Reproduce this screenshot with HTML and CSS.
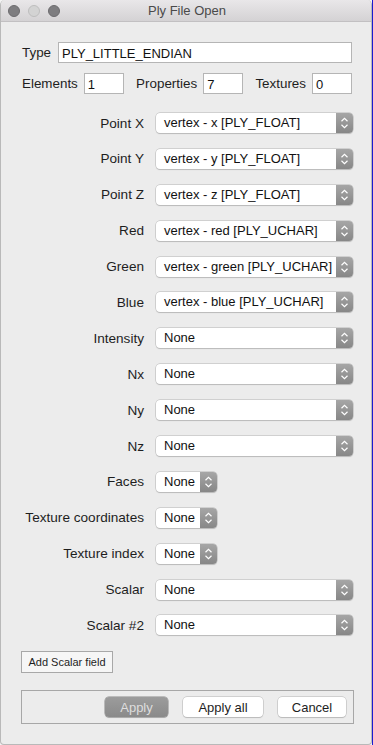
FILE: index.html
```html
<!DOCTYPE html>
<html>
<head>
<meta charset="utf-8">
<link rel="stylesheet" href="styles.css">
</head>
<body>
<div class="window">
  <div class="titlebar">
    <div class="lights">
      <span class="light"></span>
      <span class="light off"></span>
      <span class="light"></span>
    </div>
    <div class="title">Ply File Open</div>
  </div>
  <div class="content">
    <div class="type-row">
      <span class="lbl">Type</span>
      <div class="field wide">PLY_LITTLE_ENDIAN</div>
    </div>
    <div class="count-row">
      <div class="grp"><span class="lbl">Elements</span><div class="field num">1</div></div>
      <div class="grp"><span class="lbl">Properties</span><div class="field num">7</div></div>
      <div class="grp"><span class="lbl">Textures</span><div class="field num">0</div></div>
    </div>
    <div class="grid">
      <span class="rlbl">Point X</span><div class="combo"><span class="val">vertex - x [PLY_FLOAT]</span><span class="arrow"><svg viewBox="0 0 17 20" width="17" height="20"><path d="M5.5 8.2 L8.5 5.4 L11.5 8.2 M5.5 11.8 L8.5 14.6 L11.5 11.8" fill="none" stroke="#fff" stroke-width="1.2"/></svg></span></div>
      <span class="rlbl">Point Y</span><div class="combo"><span class="val">vertex - y [PLY_FLOAT]</span><span class="arrow"><svg viewBox="0 0 17 20" width="17" height="20"><path d="M5.5 8.2 L8.5 5.4 L11.5 8.2 M5.5 11.8 L8.5 14.6 L11.5 11.8" fill="none" stroke="#fff" stroke-width="1.2"/></svg></span></div>
      <span class="rlbl">Point Z</span><div class="combo"><span class="val">vertex - z [PLY_FLOAT]</span><span class="arrow"><svg viewBox="0 0 17 20" width="17" height="20"><path d="M5.5 8.2 L8.5 5.4 L11.5 8.2 M5.5 11.8 L8.5 14.6 L11.5 11.8" fill="none" stroke="#fff" stroke-width="1.2"/></svg></span></div>
      <span class="rlbl">Red</span><div class="combo"><span class="val">vertex - red [PLY_UCHAR]</span><span class="arrow"><svg viewBox="0 0 17 20" width="17" height="20"><path d="M5.5 8.2 L8.5 5.4 L11.5 8.2 M5.5 11.8 L8.5 14.6 L11.5 11.8" fill="none" stroke="#fff" stroke-width="1.2"/></svg></span></div>
      <span class="rlbl">Green</span><div class="combo"><span class="val">vertex - green [PLY_UCHAR]</span><span class="arrow"><svg viewBox="0 0 17 20" width="17" height="20"><path d="M5.5 8.2 L8.5 5.4 L11.5 8.2 M5.5 11.8 L8.5 14.6 L11.5 11.8" fill="none" stroke="#fff" stroke-width="1.2"/></svg></span></div>
      <span class="rlbl">Blue</span><div class="combo"><span class="val">vertex - blue [PLY_UCHAR]</span><span class="arrow"><svg viewBox="0 0 17 20" width="17" height="20"><path d="M5.5 8.2 L8.5 5.4 L11.5 8.2 M5.5 11.8 L8.5 14.6 L11.5 11.8" fill="none" stroke="#fff" stroke-width="1.2"/></svg></span></div>
      <span class="rlbl">Intensity</span><div class="combo"><span class="val">None</span><span class="arrow"><svg viewBox="0 0 17 20" width="17" height="20"><path d="M5.5 8.2 L8.5 5.4 L11.5 8.2 M5.5 11.8 L8.5 14.6 L11.5 11.8" fill="none" stroke="#fff" stroke-width="1.2"/></svg></span></div>
      <span class="rlbl">Nx</span><div class="combo"><span class="val">None</span><span class="arrow"><svg viewBox="0 0 17 20" width="17" height="20"><path d="M5.5 8.2 L8.5 5.4 L11.5 8.2 M5.5 11.8 L8.5 14.6 L11.5 11.8" fill="none" stroke="#fff" stroke-width="1.2"/></svg></span></div>
      <span class="rlbl">Ny</span><div class="combo"><span class="val">None</span><span class="arrow"><svg viewBox="0 0 17 20" width="17" height="20"><path d="M5.5 8.2 L8.5 5.4 L11.5 8.2 M5.5 11.8 L8.5 14.6 L11.5 11.8" fill="none" stroke="#fff" stroke-width="1.2"/></svg></span></div>
      <span class="rlbl">Nz</span><div class="combo"><span class="val">None</span><span class="arrow"><svg viewBox="0 0 17 20" width="17" height="20"><path d="M5.5 8.2 L8.5 5.4 L11.5 8.2 M5.5 11.8 L8.5 14.6 L11.5 11.8" fill="none" stroke="#fff" stroke-width="1.2"/></svg></span></div>
      <span class="rlbl">Faces</span><div class="combo small"><span class="val">None</span><span class="arrow"><svg viewBox="0 0 17 20" width="17" height="20"><path d="M5.5 8.2 L8.5 5.4 L11.5 8.2 M5.5 11.8 L8.5 14.6 L11.5 11.8" fill="none" stroke="#fff" stroke-width="1.2"/></svg></span></div>
      <span class="rlbl">Texture coordinates</span><div class="combo small"><span class="val">None</span><span class="arrow"><svg viewBox="0 0 17 20" width="17" height="20"><path d="M5.5 8.2 L8.5 5.4 L11.5 8.2 M5.5 11.8 L8.5 14.6 L11.5 11.8" fill="none" stroke="#fff" stroke-width="1.2"/></svg></span></div>
      <span class="rlbl">Texture index</span><div class="combo small"><span class="val">None</span><span class="arrow"><svg viewBox="0 0 17 20" width="17" height="20"><path d="M5.5 8.2 L8.5 5.4 L11.5 8.2 M5.5 11.8 L8.5 14.6 L11.5 11.8" fill="none" stroke="#fff" stroke-width="1.2"/></svg></span></div>
      <span class="rlbl">Scalar</span><div class="combo"><span class="val">None</span><span class="arrow"><svg viewBox="0 0 17 20" width="17" height="20"><path d="M5.5 8.2 L8.5 5.4 L11.5 8.2 M5.5 11.8 L8.5 14.6 L11.5 11.8" fill="none" stroke="#fff" stroke-width="1.2"/></svg></span></div>
      <span class="rlbl">Scalar #2</span><div class="combo"><span class="val">None</span><span class="arrow"><svg viewBox="0 0 17 20" width="17" height="20"><path d="M5.5 8.2 L8.5 5.4 L11.5 8.2 M5.5 11.8 L8.5 14.6 L11.5 11.8" fill="none" stroke="#fff" stroke-width="1.2"/></svg></span></div>
    </div>
    <div class="add-row"><button class="add-btn">Add Scalar field</button></div>
    <div class="btn-box">
      <button class="btn disabled">Apply</button>
      <button class="btn">Apply all</button>
      <button class="btn cancel">Cancel</button>
    </div>
  </div>
</div>
</body>
</html>
```
FILE: styles.css
```css
* { box-sizing: border-box; }
html, body { margin: 0; padding: 0; }
body {
  background: #f4f4f4;
  font-family: "Liberation Sans", Arial, sans-serif;
  font-size: 13px;
  color: #1e1e1e;
  width: 373px;
  height: 745px;
  overflow: hidden;
  border-right: 1px solid #1b1bd0;
}
.window {
  width: 372px;
  height: 745px;
  background: #ececec;
  border: 1px solid #b9b9b9;
  border-top: none;
  border-radius: 5px 5px 4px 4px;
  overflow: hidden;
  display: flex;
  flex-direction: column;
}
.titlebar {
  height: 22px;
  flex: none;
  background: linear-gradient(#e9e7e9, #d4d2d4);
  border-bottom: 1px solid #c2c0c2;
  display: flex;
  align-items: center;
  position: relative;
}
.lights {
  display: flex;
  gap: 8px;
  padding-left: 7px;
}
.light {
  width: 12px;
  height: 12px;
  border-radius: 50%;
  background: #7e7d80;
  border: 1px solid #6c6b6e;
}
.light.off {
  background: #d3d3d3;
  border-color: #bdbdbd;
}
.title {
  position: absolute;
  left: 0;
  right: 0;
  top: 0;
  line-height: 22px;
  text-align: center;
  color: #4a4a4a;
  font-size: 13px;
  padding-left: 2px;
}
.content {
  padding: 20px 19px 0 20px;
  display: flex;
  flex-direction: column;
}
.type-row {
  display: flex;
  align-items: center;
  gap: 7px;
  height: 21px;
}
.lbl { padding-left: 1px; font-size: 13.4px; }
.field {
  height: 21px;
  background: #fff;
  border: 1px solid #b5b5b5;
  line-height: 20px;
  padding: 1px 3px 0;
  font-size: 13px;
  color: #111;
}
.field.wide { flex: 1; }
.field.num { width: 40px; }
.count-row {
  margin-top: 10px;
  display: flex;
  justify-content: space-between;
  height: 21px;
  align-items: center;
}
.grp {
  display: flex;
  align-items: center;
  gap: 6px;
}
.grid {
  margin-top: 19px;
  display: grid;
  grid-template-columns: 123px 197px;
  column-gap: 12px;
  row-gap: 15.9px;
  align-items: center;
}
.rlbl {
  text-align: right;
  white-space: nowrap;
  font-size: 13.6px;
}
.combo {
  height: 20px;
  background: #fff;
  border-radius: 4px;
  box-shadow: 0 0 0 0.5px #b4b4b4, 0 1px 1px rgba(0,0,0,0.18);
  display: flex;
  align-items: center;
  overflow: hidden;
}
.combo.small { width: 61px; }
.val {
  flex: 1;
  padding-left: 8px;
  white-space: nowrap;
  overflow: hidden;
  line-height: 20px;
  color: #111;
}
.arrow {
  width: 17px;
  height: 20px;
  flex: none;
  background: linear-gradient(#a6a6a6, #878787);
  display: flex;
}
.add-row {
  margin-top: 16px;
}
.add-btn {
  font-family: "Liberation Sans", Arial, sans-serif;
  font-size: 11px;
  height: 22px;
  width: 92px;
  padding: 0;
  background: #f6f6f6;
  border: 1px solid #a8a8a8;
  color: #1e1e1e;
}
.btn-box {
  margin-top: 17px;
  height: 34px;
  border: 1px solid #a7a7a7;
  display: flex;
  justify-content: flex-end;
  align-items: center;
  gap: 15px;
  padding-right: 7px;
  width: 333px;
}
.btn {
  font-family: "Liberation Sans", Arial, sans-serif;
  font-size: 13px;
  height: 20px;
  padding: 0;
  background: #fff;
  border: none;
  border-radius: 4px;
  box-shadow: 0 0 0 0.5px #b4b4b4, 0 1px 1px rgba(0,0,0,0.18);
  color: #1e1e1e;
  width: 80px;
}
.btn.disabled {
  width: 63px;
  background: linear-gradient(#9c9c9c, #8a8a8a);
  color: #dedede;
  box-shadow: 0 0 0 0.5px #8a8a8a, 0 1px 1px rgba(0,0,0,0.15);
}
.btn.cancel { width: 68px; }
```
